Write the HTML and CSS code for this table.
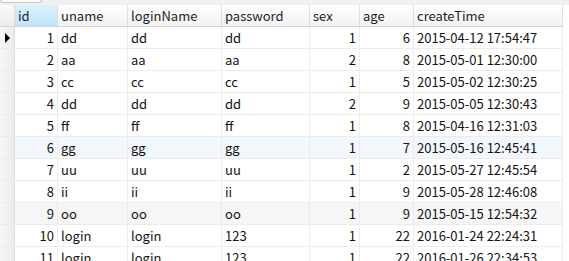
FILE: index.html
```html
<!DOCTYPE html>
<html lang="zh">

<head>
    <meta charset="UTF-8">
    <title>user</title>
    <link rel="stylesheet" href="styles.css">
</head>

<body>
    <!-- Toolbar strip above the grid -->
    <div class="toolbar">
        <div class="tool-tab"></div>
    </div>

    <div class="grid">
        <div class="row head">
            <div class="cell ind"></div>
            <div class="cell c-id active">id</div>
            <div class="cell c-uname">uname</div>
            <div class="cell c-login">loginName</div>
            <div class="cell c-pass">password</div>
            <div class="cell c-sex">sex</div>
            <div class="cell c-age">age</div>
            <div class="cell c-time">createTime</div>
        </div>
    </div>

    <script>
        // Rows of the user table
        const rows = [
            [1, 'dd', 'dd', 'dd', 1, 6, '2015-04-12 17:54:47'],
            [2, 'aa', 'aa', 'aa', 2, 8, '2015-05-01 12:30:00'],
            [3, 'cc', 'cc', 'cc', 1, 5, '2015-05-02 12:30:25'],
            [4, 'dd', 'dd', 'dd', 2, 9, '2015-05-05 12:30:43'],
            [5, 'ff', 'ff', 'ff', 1, 8, '2015-04-16 12:31:03'],
            [6, 'gg', 'gg', 'gg', 1, 7, '2015-05-16 12:45:41'],
            [7, 'uu', 'uu', 'uu', 1, 2, '2015-05-27 12:45:54'],
            [8, 'ii', 'ii', 'ii', 1, 9, '2015-05-28 12:46:08'],
            [9, 'oo', 'oo', 'oo', 1, 9, '2015-05-15 12:54:32'],
            [10, 'login', 'login', '123', 1, 22, '2016-01-24 22:24:31'],
            [11, 'login', 'login', '123', 1, 22, '2016-01-26 22:34:53']
        ];
        const classes = ['c-id num', 'c-uname', 'c-login', 'c-pass', 'c-sex num', 'c-age num', 'c-time'];
        const grid = document.querySelector('.grid');

        rows.forEach(function (data, i) {
            const row = document.createElement('div');
            row.className = 'row';
            if (i === 5) row.classList.add('hover');
            if (i === 8) row.classList.add('muted');

            const ind = document.createElement('div');
            ind.className = 'cell ind';
            if (i === 0) {
                const arrow = document.createElement('span');
                arrow.className = 'arrow';
                ind.appendChild(arrow);
            }
            row.appendChild(ind);

            data.forEach(function (value, j) {
                const cell = document.createElement('div');
                cell.className = 'cell ' + classes[j];
                cell.textContent = value;
                row.appendChild(cell);
            });
            grid.appendChild(row);
        });
    </script>
</body>

</html>
```

FILE: styles.css
```css
/* General */
body {
    margin: 0;
    background-color: #ffffff;
    font-family: "Noto Sans CJK SC", "Noto Sans", sans-serif;
    font-size: 13px;
    color: #141414;
    overflow: hidden;
}

/* Toolbar strip */
.toolbar {
    height: 5px;
    background-color: #f0f0f0;
}

.tool-tab {
    width: 40px;
    height: 2px;
    border: 1px solid #c8c8c8;
    border-top: none;
    border-radius: 0 0 3px 3px;
    background-color: #fafafa;
}

/* Grid */
.grid {
    width: max-content;
}

.row {
    display: flex;
    height: 21px;
    border-bottom: 1px solid #ececec;
    background-color: #ffffff;
}

.row.hover {
    background-color: #f1f7fd;
}

.row.muted {
    background-color: #f6f6f6;
}

.cell {
    box-sizing: border-box;
    height: 21px;
    line-height: 21px;
    padding: 0 3px;
    border-right: 1px solid #ececec;
    white-space: nowrap;
    overflow: hidden;
}

.cell.num {
    text-align: right;
}

.ind {
    width: 15px;
    padding: 0 0 0 1px;
    background: linear-gradient(to right, #f7f7f7, #ebebeb);
    border-right: 1px solid #dcdcdc;
    display: flex;
    align-items: center;
    justify-content: center;
}

.arrow {
    width: 0;
    height: 0;
    border-top: 5px solid transparent;
    border-bottom: 5px solid transparent;
    border-left: 5px solid #000000;
}

.c-id { width: 43px; }
.c-uname { width: 70px; }
.c-login { width: 94px; }
.c-pass { width: 88px; }
.c-sex { width: 50px; }
.c-age { width: 54px; }
.c-time { width: 149px; }

/* Header row */
.row.head {
    background: linear-gradient(to bottom, #ffffff, #f1f2f4);
    border-bottom: 1px solid #d5d5d5;
}

.head .cell {
    border-right: 1px solid #dedede;
    color: #1e1e1e;
}

.head .ind {
    background: linear-gradient(to bottom, #fafafa, #ececec);
}

.head .active {
    background: linear-gradient(to bottom, #dcf1fc, #bde5fb);
}
```
